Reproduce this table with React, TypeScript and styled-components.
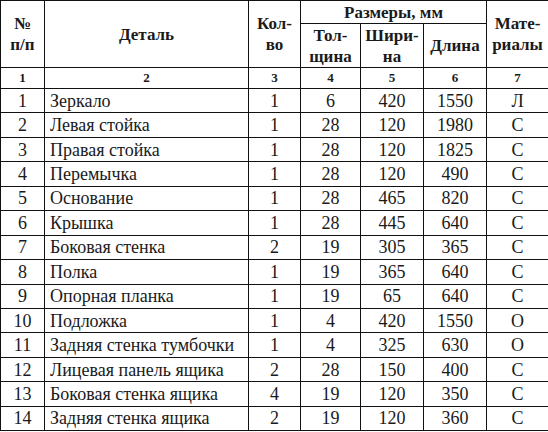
import * as React from "react"
import styled, { createGlobalStyle } from "styled-components"

type Part = {
  name: string
  qty: number
  thick: number
  width: number
  length: number
  mat: string
}

const parts: Part[] = [
  { name: "Зеркало", qty: 1, thick: 6, width: 420, length: 1550, mat: "Л" },
  { name: "Левая стойка", qty: 1, thick: 28, width: 120, length: 1980, mat: "С" },
  { name: "Правая стойка", qty: 1, thick: 28, width: 120, length: 1825, mat: "С" },
  { name: "Перемычка", qty: 1, thick: 28, width: 120, length: 490, mat: "С" },
  { name: "Основание", qty: 1, thick: 28, width: 465, length: 820, mat: "С" },
  { name: "Крышка", qty: 1, thick: 28, width: 445, length: 640, mat: "С" },
  { name: "Боковая стенка", qty: 2, thick: 19, width: 305, length: 365, mat: "С" },
  { name: "Полка", qty: 1, thick: 19, width: 365, length: 640, mat: "С" },
  { name: "Опорная планка", qty: 1, thick: 19, width: 65, length: 640, mat: "С" },
  { name: "Подложка", qty: 1, thick: 4, width: 420, length: 1550, mat: "О" },
  { name: "Задняя стенка тумбочки", qty: 1, thick: 4, width: 325, length: 630, mat: "О" },
  { name: "Лицевая панель ящика", qty: 2, thick: 28, width: 150, length: 400, mat: "С" },
  { name: "Боковая стенка ящика", qty: 4, thick: 19, width: 120, length: 350, mat: "С" },
  { name: "Задняя стенка ящика", qty: 2, thick: 19, width: 120, length: 360, mat: "С" },
]

const colWidths = [44, 204, 52, 60, 63, 63, 62]

export default function App() {
  return (
    <>
      <GlobalStyle />
      <Table>
        <colgroup>
          {colWidths.map((w, i) => (
            <col key={i} style={{ width: w }} />
          ))}
        </colgroup>
        <thead>
          <TopRow>
            <HeadCell rowSpan={2}>
              №<br />п/п
            </HeadCell>
            <HeadCell rowSpan={2}>Деталь</HeadCell>
            <HeadCell rowSpan={2}>
              Кол-
              <br />
              во
            </HeadCell>
            <HeadCell colSpan={3}>Размеры, мм</HeadCell>
            <HeadCell rowSpan={2}>
              Мате-
              <br />
              риалы
            </HeadCell>
          </TopRow>
          <SubRow>
            <HeadCell>
              Тол-
              <br />
              щина
            </HeadCell>
            <HeadCell>
              Шири-
              <br />
              на
            </HeadCell>
            <HeadCell>Длина</HeadCell>
          </SubRow>
          <IndexRow>
            {[1, 2, 3, 4, 5, 6, 7].map((n) => (
              <IndexCell key={n}>{n}</IndexCell>
            ))}
          </IndexRow>
        </thead>
        <tbody>
          {parts.map((p, i) => (
            <DataRow key={p.name}>
              <Cell>{i + 1}</Cell>
              <Cell $left>{p.name}</Cell>
              <Cell>{p.qty}</Cell>
              <Cell>{p.thick}</Cell>
              <Cell>{p.width}</Cell>
              <Cell>{p.length}</Cell>
              <Cell>{p.mat}</Cell>
            </DataRow>
          ))}
        </tbody>
      </Table>
    </>
  )
}

/* ---------------- styles ---------------- */

const GlobalStyle = createGlobalStyle`
  html, body {
    margin: 0;
    padding: 0;
    background: #fff;
  }
`

const Table = styled.table`
  width: 548px;
  table-layout: fixed;
  border-collapse: collapse;
  font-family: "Liberation Serif", "Times New Roman", serif;
  color: #1a1a1a;
`

const TopRow = styled.tr`
  height: 23px;
`

const SubRow = styled.tr`
  height: 44px;
`

const IndexRow = styled.tr`
  height: 21px;
`

const DataRow = styled.tr`
  height: 24.45px;
`

const HeadCell = styled.th`
  border: 1px solid #111;
  padding: 0;
  text-align: center;
  vertical-align: middle;
  white-space: nowrap;
  font-size: 17px;
  line-height: 21px;
  font-weight: 700;
`

const IndexCell = styled.td`
  border: 1px solid #111;
  padding: 0;
  text-align: center;
  font-size: 13px;
  font-weight: 700;
  line-height: 16px;
`

const Cell = styled.td<{ $left?: boolean }>`
  border: 1px solid #111;
  padding: 0 ${({ $left }) => ($left ? "5px" : "0")};
  text-align: ${({ $left }) => ($left ? "left" : "center")};
  font-size: 18px;
  line-height: 20px;
  white-space: nowrap;
`
